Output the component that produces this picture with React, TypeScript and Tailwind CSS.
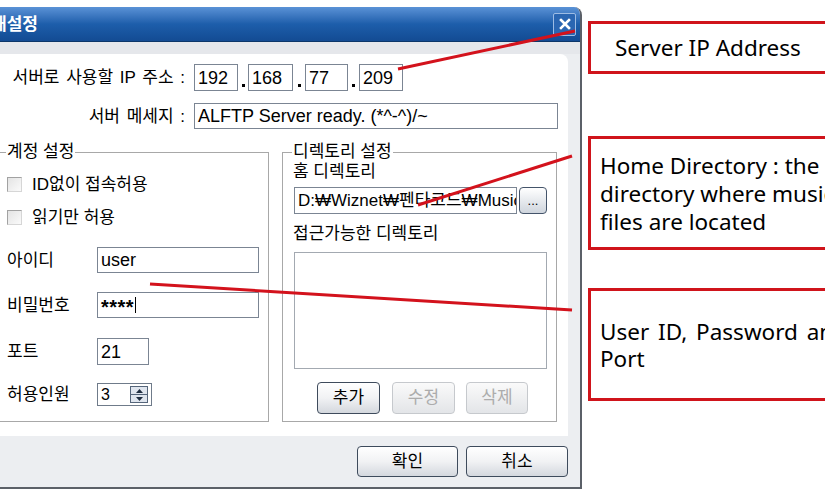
import React from "react";

const inputCls =
  "border border-[#7b8593] bg-white flex items-center px-[3px] text-[18px] text-black leading-none whitespace-nowrap overflow-hidden";

function Btn({
  label,
  w,
  h,
  disabled,
  className = "",
}: {
  label: string;
  w: string;
  h: string;
  disabled?: boolean;
  className?: string;
}) {
  return (
    <div
      className={`${w} ${h} ${className} flex items-center justify-center rounded-[4px] text-[17px] ${
        disabled
          ? "border border-[#c6c9cd] bg-gradient-to-b from-[#fafafa] to-[#e3e5e8] text-[#acacac]"
          : "border border-[#3e4b5c] bg-gradient-to-b from-[#ffffff] via-[#f1f2f4] to-[#d4d8de] text-black"
      }`}
    >
      {label}
    </div>
  );
}

function Check({ label }: { label: string }) {
  return (
    <div className="flex items-center h-[16px]">
      <div className="w-[15px] h-[15px] border border-[#a2a2a2] border-r-[#d6d6d6] border-b-[#d6d6d6] bg-gradient-to-br from-[#e4e4e4] to-[#fafafa]" />
      <span className="ml-[10px] text-[17px] leading-none text-black">{label}</span>
    </div>
  );
}

function Dot({ w }: { w: string }) {
  return (
    <div className={`${w} h-full flex items-end justify-center pb-[4px]`}>
      <div className="w-[3px] h-[3px] bg-black" />
    </div>
  );
}

function Dialog() {
  return (
    <div className="ml-[-20px] mt-[7px] w-[602px] flex flex-col bg-[#eceef1] border-r-2 border-b-2 border-[#5b6068] rounded-tr-[8px] overflow-hidden shrink-0">
      {/* title bar */}
      <div className="h-[35px] flex items-center justify-between pl-[11px] pr-[4px] bg-gradient-to-b from-[#5a92d6] via-[#1d5eab] to-[#134b93] border-b border-[#0c3669]">
        <span className="text-white font-bold text-[17px] leading-none">재설정</span>
        <div className="w-[23px] h-[23px] border border-[#9dbce4] bg-[#2a66b2] rounded-[2px] flex items-center justify-center">
          <svg width="12" height="12" viewBox="0 0 12 12">
            <path d="M2 2 L10 10 M10 2 L2 10" stroke="white" strokeWidth="2.6" strokeLinecap="square" />
          </svg>
        </div>
      </div>
      <div className="h-[12px] bg-[#e5e7eb]" />
      {/* panel */}
      <div className="ml-[10px] mr-[12px] h-[382px] bg-white rounded-tr-[8px] pt-[10px] flex flex-col">
        {/* IP row */}
        <div className="flex items-center h-[27px]">
          <div className="w-[195px] text-right text-[17px] leading-none text-black whitespace-nowrap [word-spacing:2px]">서버로 사용할 IP 주소 :</div>
          <div className="ml-[9px] flex h-[27px]">
            <div className={`${inputCls} w-[44px] h-[27px]`}>192</div>
            <Dot w="w-[10px]" />
            <div className={`${inputCls} w-[45px] h-[27px]`}>168</div>
            <Dot w="w-[12px]" />
            <div className={`${inputCls} w-[43px] h-[27px]`}>77</div>
            <Dot w="w-[11px]" />
            <div className={`${inputCls} w-[44px] h-[27px]`}>209</div>
          </div>
        </div>
        {/* message row */}
        <div className="flex items-center h-[26px] mt-[12px]">
          <div className="w-[195px] text-right text-[17px] leading-none text-black whitespace-nowrap [word-spacing:2px]">서버 메세지 :</div>
          <div className={`${inputCls} ml-[9px] w-[364px] h-[26px]`}>ALFTP Server ready. (*^-^)/~</div>
        </div>
        {/* groups */}
        <div className="flex mt-[23px]">
          {/* left group */}
          <div className="relative ml-[7px] w-[272px] h-[270px] border border-[#a8a8a8] pl-[9px] pt-[23px] flex flex-col">
            <span className="absolute left-[8px] top-[-11px] bg-white px-[1px] text-[17px] leading-[20px] text-black">계정 설정</span>
            <Check label="ID없이 접속허용" />
            <div className="mt-[17px]">
              <Check label="읽기만 허용" />
            </div>
            <div className="mt-[22px] flex items-center h-[26px]">
              <div className="w-[90px] text-[17px] leading-none">아이디</div>
              <div className={`${inputCls} w-[162px] h-[26px]`}>user</div>
            </div>
            <div className="mt-[19px] flex items-center h-[26px]">
              <div className="w-[90px] text-[17px] leading-none">비밀번호</div>
              <div className={`${inputCls} w-[162px] h-[26px]`}>
                <span className="text-[20px] font-bold tracking-[0.5px] mt-[4px]">****</span>
                <span className="w-[1px] h-[16px] bg-black ml-[1px]" />
              </div>
            </div>
            <div className="mt-[20px] flex items-center h-[27px]">
              <div className="w-[90px] text-[17px] leading-none">포트</div>
              <div className={`${inputCls} w-[52px] h-[27px]`}>21</div>
            </div>
            <div className="mt-[18px] flex items-center h-[23px]">
              <div className="w-[90px] text-[17px] leading-none">허용인원</div>
              <div className="w-[55px] h-[23px] border border-[#6f7b8a] bg-white flex items-center justify-between pl-[3px] pr-[3px]">
                <span className="text-[16px] leading-none">3</span>
                <div className="flex flex-col w-[18px] h-[17px] border border-[#55657a] bg-[#dfe5ee]">
                  <div className="flex-1 flex items-center justify-center border-b border-[#55657a]">
                    <svg width="7" height="4" viewBox="0 0 7 4"><path d="M0 4 L3.5 0 L7 4Z" fill="#1f2d40" /></svg>
                  </div>
                  <div className="flex-1 flex items-center justify-center">
                    <svg width="7" height="4" viewBox="0 0 7 4"><path d="M0 0 L3.5 4 L7 0Z" fill="#1f2d40" /></svg>
                  </div>
                </div>
              </div>
            </div>
          </div>
          {/* right group */}
          <div className="relative ml-[13px] w-[275px] h-[270px] border border-[#a8a8a8] pl-[10px] pt-[10px] flex flex-col">
            <span className="absolute left-[9px] top-[-11px] bg-white px-[1px] text-[17px] leading-[20px] text-black">디렉토리 설정</span>
            <div className="h-[18px] text-[17px] leading-[18px]">홈 디렉토리</div>
            <div className="mt-[6px] ml-[1px] flex">
              <div className={`${inputCls} w-[223px] h-[27px] !text-[17px]`}>D:₩Wiznet₩펜타코드₩Music</div>
              <div className="ml-[2px] w-[28px] h-[27px] rounded-[4px] border border-[#44546a] bg-gradient-to-b from-[#ffffff] to-[#cfd5dd] flex items-end justify-center pb-[6px] text-[13px] leading-none">
                ...
              </div>
            </div>
            <div className="mt-[11px] h-[18px] text-[17px] leading-[18px]">접근가능한 디렉토리</div>
            <div className="mt-[9px] ml-[1px] w-[253px] h-[117px] border border-[#a3a9b1] bg-white" />
            <div className="mt-[13px] ml-[24px] flex">
              <Btn label="추가" w="w-[63px]" h="h-[32px]" />
              <Btn label="수정" w="w-[63px]" h="h-[32px]" disabled className="ml-[12px]" />
              <Btn label="삭제" w="w-[62px]" h="h-[32px]" disabled className="ml-[11px]" />
            </div>
          </div>
        </div>
      </div>
      {/* bottom buttons */}
      <div className="flex justify-end pr-[12px] pt-[10px] pb-[10px]">
        <Btn label="확인" w="w-[101px]" h="h-[31px]" />
        <Btn label="취소" w="w-[102px]" h="h-[31px]" className="ml-[8px]" />
      </div>
    </div>
  );
}

function Callouts() {
  const box = "w-[280px] border-[3px] border-[#d0141b] bg-white font-['Noto_Sans',sans-serif] text-[22.5px] text-black whitespace-nowrap";
  return (
    <div className="ml-[6px] flex flex-col shrink-0">
      <div className={`${box} mt-[21px] h-[53px] flex items-center pl-[24px]`}>Server IP Address</div>
      <div className={`${box} mt-[62px] h-[114px] pl-[9px] pt-[13px] leading-[28px]`}>
        <div>Home Directory : the</div>
        <div>directory where music</div>
        <div>files are located</div>
      </div>
      <div className={`${box} mt-[38px] h-[113px] pl-[9px] pt-[27px] leading-[27px]`}>
        <div className="[word-spacing:3px]">User ID, Password and</div>
        <div>Port</div>
      </div>
    </div>
  );
}

export default function App() {
  return (
    <div className="relative w-[825px] h-[499px] overflow-hidden bg-white font-['Liberation_Sans','Noto_Sans_CJK_KR',sans-serif]">
      <div className="flex items-start">
        <Dialog />
        <Callouts />
      </div>
      <svg className="absolute left-0 top-0 pointer-events-none" width="825" height="499">
        <line x1="398" y1="69" x2="575" y2="31" stroke="#d3121c" strokeWidth="3" />
        <line x1="418" y1="205" x2="572" y2="156" stroke="#d3121c" strokeWidth="3" />
        <line x1="150" y1="284" x2="572" y2="310" stroke="#d3121c" strokeWidth="3" />
      </svg>
    </div>
  );
}
